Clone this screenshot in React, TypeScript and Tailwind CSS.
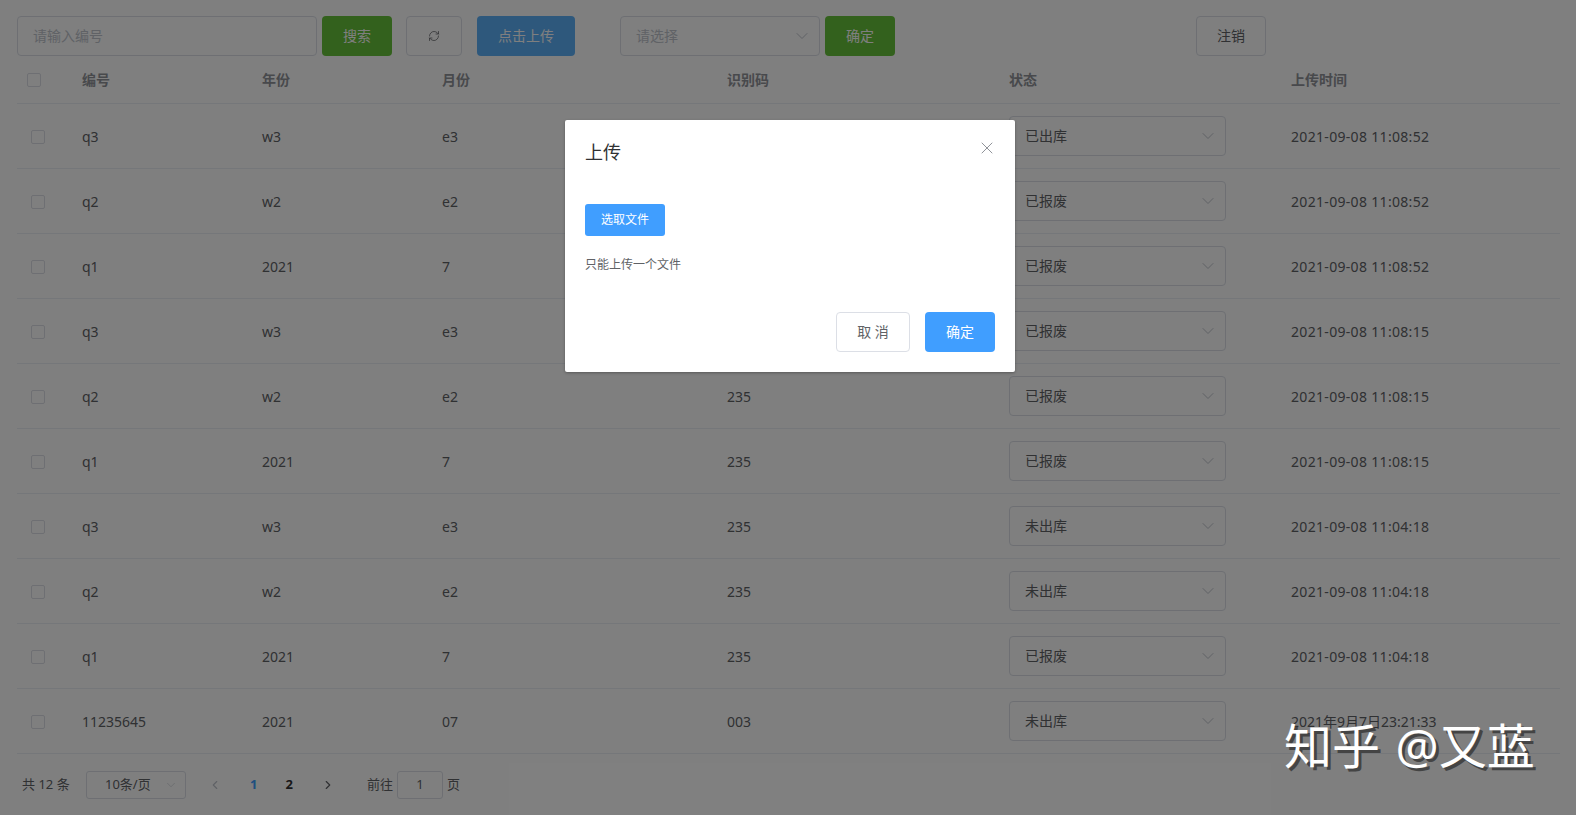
import { ChevronDown, ChevronLeft, ChevronRight, RefreshCw, X } from "lucide-react";

const FONT = "font-['Noto_Sans','Noto_Sans_CJK_SC',sans-serif]";
const COLS = "grid grid-cols-[55px_180px_180px_285px_282px_282px_1fr]";

const rows = [
  ["q3", "w3", "e3", "235", "已出库", "2021-09-08 11:08:52"],
  ["q2", "w2", "e2", "235", "已报废", "2021-09-08 11:08:52"],
  ["q1", "2021", "7", "235", "已报废", "2021-09-08 11:08:52"],
  ["q3", "w3", "e3", "235", "已报废", "2021-09-08 11:08:15"],
  ["q2", "w2", "e2", "235", "已报废", "2021-09-08 11:08:15"],
  ["q1", "2021", "7", "235", "已报废", "2021-09-08 11:08:15"],
  ["q3", "w3", "e3", "235", "未出库", "2021-09-08 11:04:18"],
  ["q2", "w2", "e2", "235", "未出库", "2021-09-08 11:04:18"],
  ["q1", "2021", "7", "235", "已报废", "2021-09-08 11:04:18"],
  ["11235645", "2021", "07", "003", "未出库", "2021年9月7日23:21:33"],
];

function Checkbox() {
  return <span className="block w-[14px] h-[14px] border border-[#dcdfe6] rounded-[2px] bg-white" />;
}

function Toolbar() {
  return (
    <div className="flex h-10 pl-[17px] text-sm">
      <div className="w-[300px] h-10 border border-[#dcdfe6] rounded flex items-center pl-[15px] text-[#c0c4cc]">请输入编号</div>
      <button className="ml-[5px] w-[70px] h-10 rounded bg-[#67c23a] text-white">搜索</button>
      <button className="ml-[14px] w-[56px] h-10 rounded border border-[#dcdfe6] flex items-center justify-center text-[#606266]">
        <RefreshCw size={12} strokeWidth={1.5} />
      </button>
      <button className="ml-[15px] w-[98px] h-10 rounded bg-[#5cb0f8] text-white">点击上传</button>
      <div className="ml-[45px] w-[200px] h-10 border border-[#dcdfe6] rounded flex items-center justify-between pl-[15px] pr-[7px] text-[#c0c4cc]">
        <span>请选择</span>
        <ChevronDown size={20} strokeWidth={1.2} />
      </div>
      <button className="ml-[5px] w-[70px] h-10 rounded bg-[#67c23a] text-white">确定</button>
      <button className="ml-[301px] w-[70px] h-10 rounded border border-[#dcdfe6] text-[#606266]">注销</button>
    </div>
  );
}

function Table() {
  const headers = ["编号", "年份", "月份", "识别码", "状态", "上传时间"];
  return (
    <div className="ml-[17px] w-[1543px] text-sm text-[#606266]">
      <div className={`${COLS} h-[48px] items-center border-b border-[#ebeef5] font-bold text-[#909399]`}>
        <div className="pl-[10px]"><Checkbox /></div>
        {headers.map((h) => (
          <div key={h} className="pl-[10px]">{h}</div>
        ))}
      </div>
      {rows.map((r, i) => (
        <div key={i} className={`${COLS} h-[65px] items-center border-b border-[#ebeef5]`}>
          <div className="pl-[14px] pt-[2px]"><Checkbox /></div>
          <div className="pl-[10px] pt-[2px]">{r[0]}</div>
          <div className="pl-[10px] pt-[2px]">{r[1]}</div>
          <div className="pl-[10px] pt-[2px]">{r[2]}</div>
          <div className="pl-[10px] pt-[2px]">{r[3]}</div>
          <div className="pl-[10px]">
            <div className="w-[217px] h-10 border border-[#dcdfe6] rounded flex items-center justify-between pl-[15px] pr-[7px]">
              <span>{r[4]}</span>
              <ChevronDown size={20} strokeWidth={1.2} className="text-[#c0c4cc]" />
            </div>
          </div>
          <div className={i < 9 ? "pl-[10px] pt-[2px] whitespace-nowrap tracking-[0.32px]" : "pl-[10px] pt-[2px] whitespace-nowrap"}>{r[5]}</div>
        </div>
      ))}
    </div>
  );
}

function Pagination() {
  return (
    <div className="mt-[17px] ml-[22px] h-7 flex items-center text-[13px] text-[#606266]">
      <span className="w-[64px]">共 12 条</span>
      <div className="w-[100px] h-7 border border-[#dcdfe6] rounded-[3px] flex items-center justify-between pl-[18px] pr-[7px]">
        <span>10条/页</span>
        <ChevronDown size={14} strokeWidth={1} className="text-[#c0c4cc]" />
      </div>
      <ChevronLeft size={14} strokeWidth={2} className="ml-[22px] text-[#c0c4cc]" />
      <span className="ml-[28px] font-bold text-[#409eff]">1</span>
      <span className="ml-[28px] font-bold text-[#303133]">2</span>
      <ChevronRight size={14} strokeWidth={2} className="ml-[28px] text-[#606266]" />
      <span className="ml-[32px]">前往</span>
      <div className="ml-[4px] w-[46px] h-7 border border-[#dcdfe6] rounded-[3px] flex items-center justify-center">1</div>
      <span className="ml-[4px]">页</span>
    </div>
  );
}

function Dialog() {
  return (
    <div className="relative ml-[565px] mt-[120px] w-[450px] h-[252px] bg-white rounded-[2px] shadow-[0_1px_3px_rgba(0,0,0,0.3)] pl-5 pr-5">
      <div className="pt-[18px] text-lg leading-[28px] text-[#303133]">上传</div>
      <X size={20} strokeWidth={1.2} className="absolute right-[18px] top-[18px] text-[#909399]" />
      <button className="mt-[38px] block w-[80px] h-8 rounded-[3px] bg-[#409eff] text-white text-xs">选取文件</button>
      <div className="mt-[20px] text-xs leading-[18px] text-[#606266]">只能上传一个文件</div>
      <div className="mt-[38px] flex justify-end">
        <button className="w-[74px] h-10 rounded border border-[#dcdfe6] bg-white text-sm text-[#606266]">取 消</button>
        <button className="ml-[15px] w-[70px] h-10 rounded bg-[#409eff] text-white text-sm">确定</button>
      </div>
    </div>
  );
}

export default function App() {
  return (
    <div className={`relative w-[1576px] h-[815px] overflow-hidden bg-white pt-4 ${FONT}`}>
      <Toolbar />
      <Table />
      <Pagination />
      <div className="absolute inset-0 bg-black/50 overflow-hidden">
        <Dialog />
      </div>
      <div className="absolute left-[1284px] top-[713px] text-[48px] leading-[66px] text-white whitespace-nowrap [word-spacing:3px] [text-shadow:3px_3px_0_#444444]">
        知乎 @又蓝
      </div>
    </div>
  );
}
